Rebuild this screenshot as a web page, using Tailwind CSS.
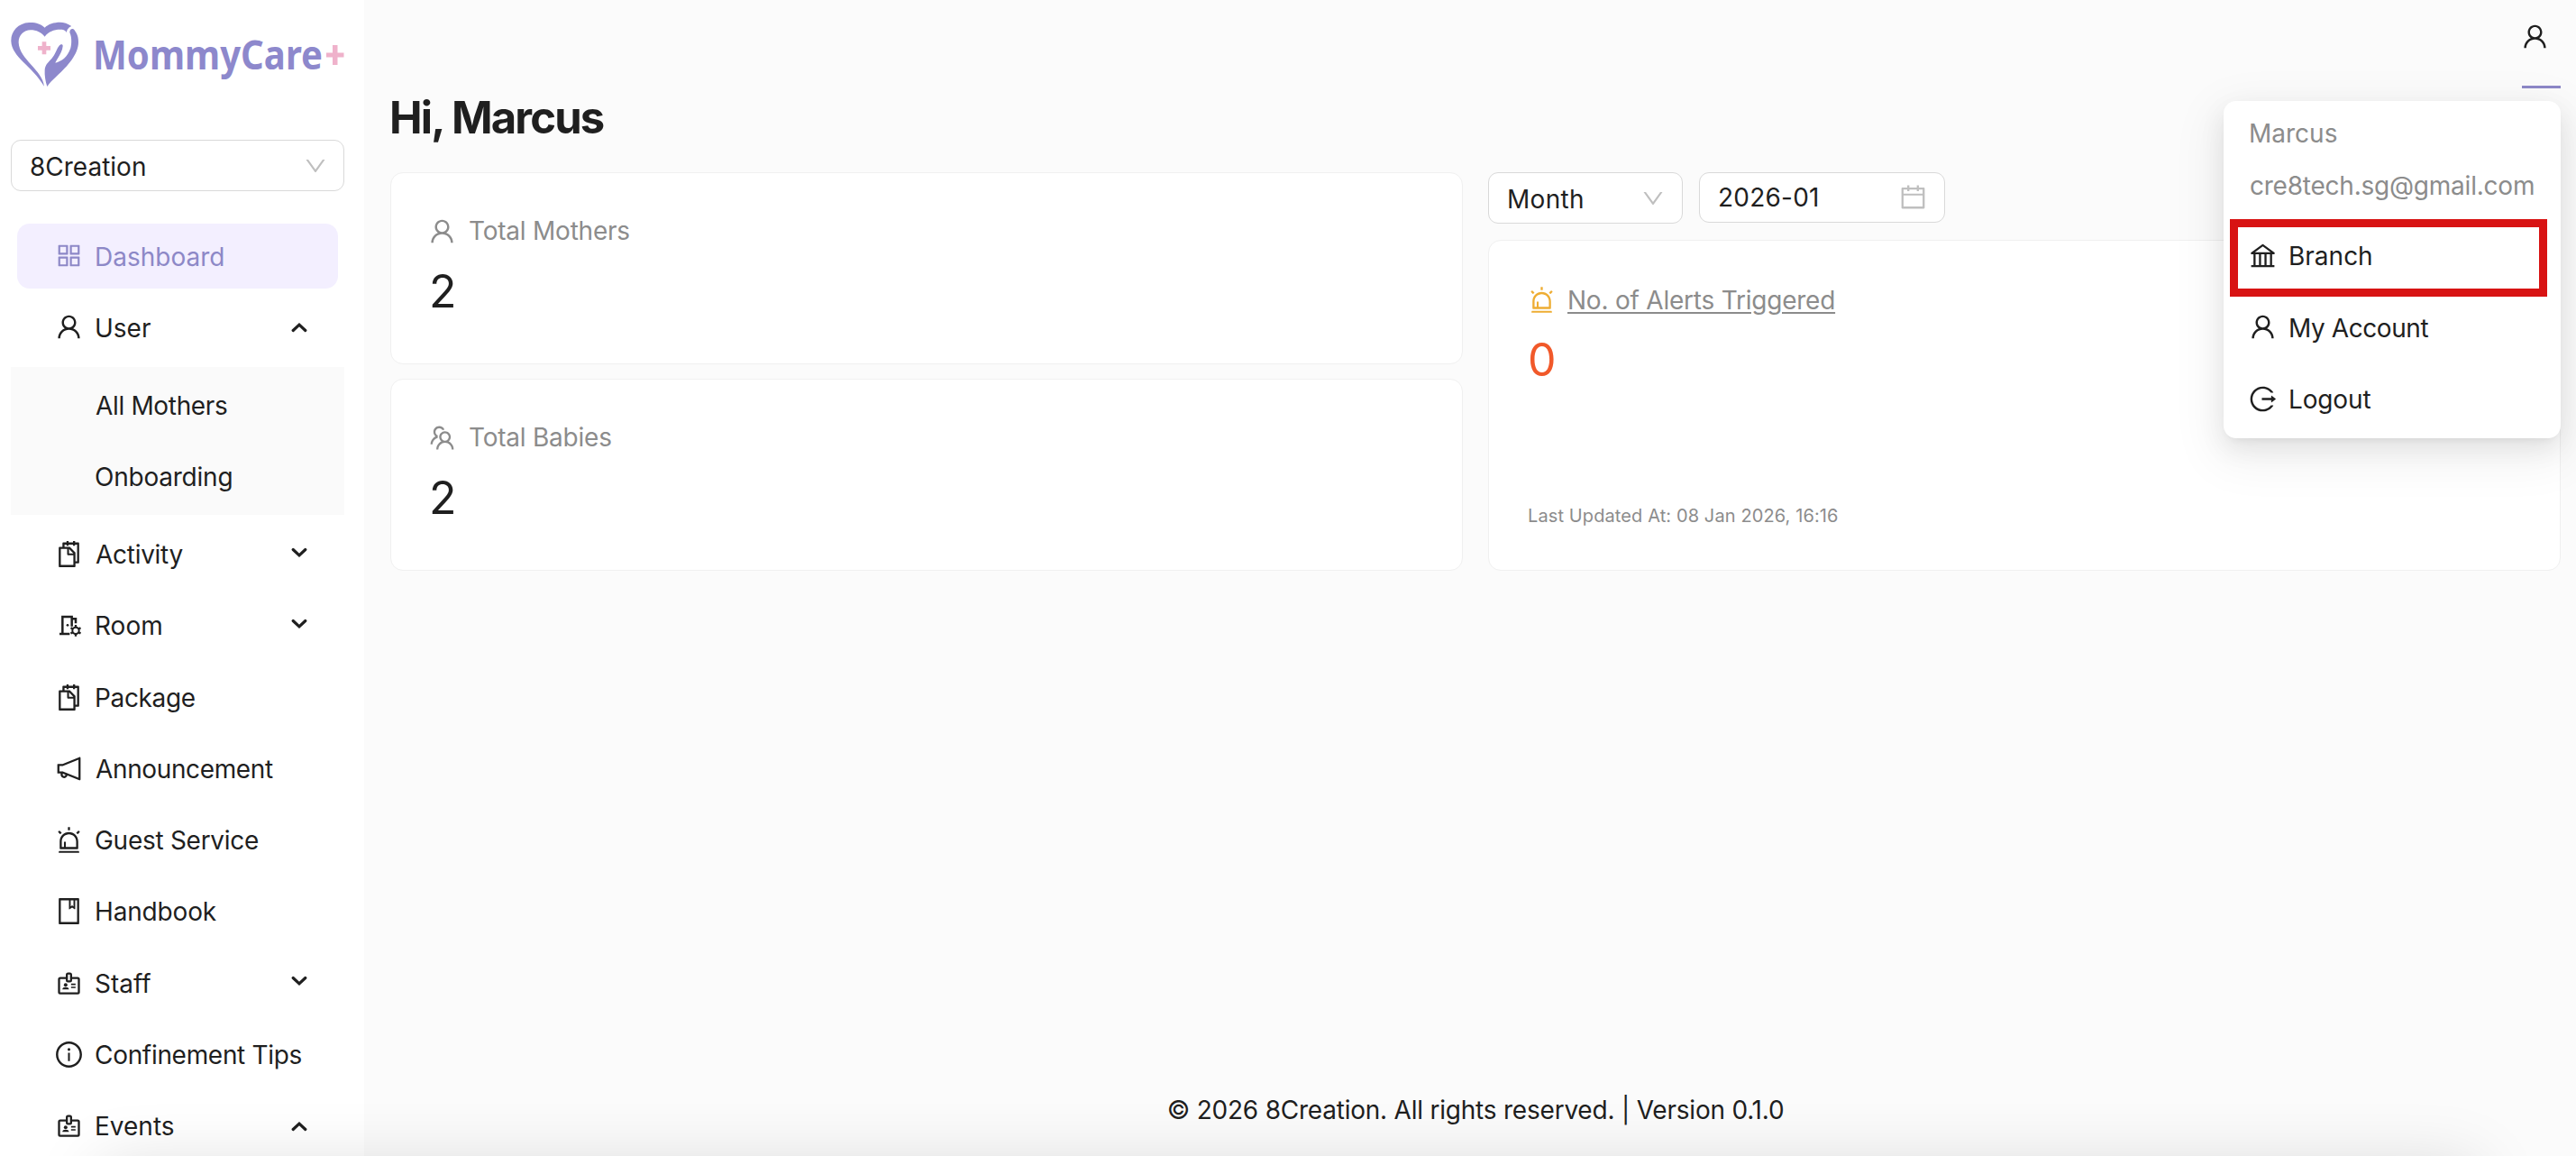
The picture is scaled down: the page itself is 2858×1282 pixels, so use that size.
<!DOCTYPE html>
<html lang="en">

<head>
  <meta charset="UTF-8">
  <meta name="viewport" content="width=device-width, initial-scale=1.0">
  <title>MommyCare+</title>
  <script src="https://cdn.jsdelivr.net/npm/@tailwindcss/browser@4"></script>
</head>

<body class="bg-[#fbfbfb] font-['Inter',sans-serif] text-[28px] text-[#1f1f1f]">
  <!-- icon sprite -->
  <svg class="hidden">
    <symbol id="user" viewBox="0 0 1024 1024"><path d="M858.5 763.6a374 374 0 00-80.6-119.5 375.63 375.63 0 00-119.5-80.6c-.4-.2-.8-.3-1.2-.5C719.5 518 760 444.7 760 362c0-137-111-248-248-248S264 225 264 362c0 82.7 40.5 156 102.8 201.1-.4.2-.8.3-1.2.5-44.8 18.9-85 46-119.5 80.6a375.63 375.63 0 00-80.6 119.5A371.7 371.7 0 00136 901.8a8 8 0 008 8.2h60c4.4 0 7.9-3.5 8-7.8 2-77.2 33-149.5 87.8-204.3 56.7-56.7 132-87.9 212.2-87.9s155.5 31.2 212.2 87.9C779 752.7 810 825 812 902.2c.1 4.4 3.6 7.8 8 7.8h60a8 8 0 008-8.2c-1-47.8-10.9-94.3-29.5-138.2zM512 534c-45.9 0-89.1-17.9-121.6-50.4S340 407.9 340 362c0-45.9 17.9-89.1 50.4-121.6S466.1 190 512 190s89.1 17.9 121.6 50.4S684 316.1 684 362c0 45.9-17.9 89.1-50.4 121.6S557.9 534 512 534z"/></symbol>
    <symbol id="appstore" viewBox="0 0 1024 1024"><path d="M464 144H160c-8.8 0-16 7.2-16 16v304c0 8.8 7.2 16 16 16h304c8.8 0 16-7.2 16-16V160c0-8.8-7.2-16-16-16zm-52 268H212V212h200v200zm452-268H560c-8.8 0-16 7.2-16 16v304c0 8.8 7.2 16 16 16h304c8.8 0 16-7.2 16-16V160c0-8.8-7.2-16-16-16zm-52 268H612V212h200v200zM464 544H160c-8.8 0-16 7.2-16 16v304c0 8.8 7.2 16 16 16h304c8.8 0 16-7.2 16-16V560c0-8.8-7.2-16-16-16zm-52 268H212V612h200v200zm452-268H560c-8.8 0-16 7.2-16 16v304c0 8.8 7.2 16 16 16h304c8.8 0 16-7.2 16-16V560c0-8.8-7.2-16-16-16zm-52 268H612V612h200v200z"/></symbol>
    <symbol id="snippets" viewBox="0 0 1024 1024"><path d="M832 112H724V72c0-4.4-3.6-8-8-8h-56c-4.4 0-8 3.6-8 8v40H500V72c0-4.4-3.6-8-8-8h-56c-4.4 0-8 3.6-8 8v40H320c-17.7 0-32 14.3-32 32v120h-96c-17.7 0-32 14.3-32 32v632c0 17.7 14.3 32 32 32h512c17.7 0 32-14.3 32-32v-96h96c17.7 0 32-14.3 32-32V144c0-17.7-14.3-32-32-32zM664 888H232V336h218v174c0 22.1 17.9 40 40 40h174v338zm0-402H514V336h.2L664 485.8v.2zm128 274h-56V456L544 264H360v-80h68v32c0 4.4 3.6 8 8 8h56c4.4 0 8-3.6 8-8v-32h152v32c0 4.4 3.6 8 8 8h56c4.4 0 8-3.6 8-8v-32h68v576z"/></symbol>
    <symbol id="notification" viewBox="0 0 1024 1024"><path d="M880 112c-3.8 0-7.7.7-11.6 2.3L292 345.9H128c-8.8 0-16 7.4-16 16.6v299c0 9.2 7.2 16.6 16 16.6h101.7c-3.7 11.6-5.7 23.9-5.7 36.4 0 65.9 53.8 119.5 120 119.5 55.4 0 102.1-37.6 115.9-88.4l408.6 164.2c3.9 1.5 7.8 2.3 11.6 2.3 16.9 0 32-14.2 32-33.2V145.2C912 126.2 897 112 880 112zM344 762.3c-26.5 0-48-21.4-48-47.8 0-11.2 3.9-21.9 11-30.4l84.9 34.1c-2 24.6-22.7 44.1-47.9 44.1zm496 58.4L318.8 611.3l-12.9-5.2H184V417.9h121.9l12.9-5.2L840 203.3v617.4z"/></symbol>
    <symbol id="alert" viewBox="0 0 1024 1024"><path d="M193 796c0 17.7 14.3 32 32 32h574c17.7 0 32-14.3 32-32V563c0-176.2-142.8-319-319-319S193 386.8 193 563v233zm72-233c0-136.4 110.6-247 247-247s247 110.6 247 247v193H404V585c0-5.5-4.5-10-10-10h-44c-5.5 0-10 4.5-10 10v171h-75V563zm-48.1-252.5l39.6-39.6c3.1-3.1 3.1-8.2 0-11.3l-67.9-67.9a8.03 8.03 0 00-11.3 0l-39.6 39.6a8.03 8.03 0 000 11.3l67.9 67.9c3.1 3.1 8.1 3.1 11.3 0zm669.6-79.2l-39.6-39.6a8.03 8.03 0 00-11.3 0l-67.9 67.9a8.03 8.03 0 000 11.3l39.6 39.6c3.1 3.1 8.2 3.1 11.3 0l67.9-67.9c3.1-3.2 3.1-8.2 0-11.3zM832 892H192c-17.7 0-32 14.3-32 32v24c0 4.4 3.6 8 8 8h688c4.4 0 8-3.6 8-8v-24c0-17.7-14.3-32-32-32zM484 180h56c4.4 0 8-3.6 8-8V76c0-4.4-3.6-8-8-8h-56c-4.4 0-8 3.6-8 8v96c0 4.4 3.6 8 8 8z"/></symbol>
    <symbol id="book" viewBox="0 0 1024 1024"><path d="M832 64H192c-17.7 0-32 14.3-32 32v832c0 17.7 14.3 32 32 32h640c17.7 0 32-14.3 32-32V96c0-17.7-14.3-32-32-32zm-260 72h96v209.9L621.5 312 572 347.4V136zm220 752H232V136h280v296.9c0 3.3 1 6.6 3 9.3a15.9 15.9 0 0022.3 3.7l83.8-59.9 81.4 59.4c2.7 2 6 3.1 9.4 3.1 8.8 0 16-7.2 16-16V136h64v752z"/></symbol>
    <symbol id="info" viewBox="0 0 1024 1024"><path d="M512 64C264.6 64 64 264.6 64 512s200.6 448 448 448 448-200.6 448-448S759.4 64 512 64zm0 820c-205.4 0-372-166.6-372-372s166.6-372 372-372 372 166.6 372 372-166.6 372-372 372z"/><path d="M464 336a48 48 0 1096 0 48 48 0 10-96 0zm72 112h-48c-4.4 0-8 3.6-8 8v272c0 4.4 3.6 8 8 8h48c4.4 0 8-3.6 8-8V456c0-4.4-3.6-8-8-8z"/></symbol>
    <symbol id="bank" viewBox="0 0 1024 1024"><path d="M894 462c30.9 0 43.8-39.7 18.7-58L530.8 126.2a31.81 31.81 0 00-37.6 0L111.3 404c-25.1 18.2-12.2 58 18.8 58H192v374h-72c-4.4 0-8 3.6-8 8v52c0 4.4 3.6 8 8 8h784c4.4 0 8-3.6 8-8v-52c0-4.4-3.6-8-8-8h-72V462h62zM512 196.7l271.1 197.2H240.9L512 196.7zM264 462h117v374H264V462zm189 0h117v374H453V462zm307 374H642V462h118v374z"/></symbol>
    <symbol id="logout" viewBox="0 0 1024 1024"><path d="M868 732h-70.3c-4.8 0-9.3 2.1-12.3 5.8-7 8.5-14.5 16.7-22.4 24.5a353.84 353.84 0 01-112.7 75.9A352.8 352.8 0 01512.4 866c-47.9 0-94.3-9.4-137.9-27.8a353.84 353.84 0 01-112.7-75.9 353.28 353.28 0 01-76-112.5C167.3 606.2 158 559.9 158 512s9.4-94.2 27.8-137.8c17.8-42.1 43.4-80 76-112.5s70.5-58.1 112.7-75.9c43.6-18.4 90-27.8 137.9-27.8 47.9 0 94.3 9.3 137.9 27.8 42.2 17.8 80.1 43.4 112.7 75.9 7.9 7.9 15.3 16.1 22.4 24.5 3 3.7 7.6 5.8 12.3 5.8H868c6.3 0 10.2-7 6.7-12.3C798 160.5 663.8 81.6 511.3 82 271.7 82.6 79.6 277.1 82 516.4 84.4 751.9 276.2 942 512.4 942c152.1 0 285.7-78.8 362.3-197.7 3.4-5.3-.4-12.3-6.7-12.3zm88.9-226.3L815 393.7c-5.3-4.2-13-.4-13 6.3v76H488c-4.4 0-8 3.6-8 8v56c0 4.4 3.6 8 8 8h314v76c0 6.7 7.8 10.5 13 6.3l141.9-112a8 8 0 000-12.6z"/></symbol>
    <symbol id="calendar" viewBox="0 0 1024 1024"><path d="M880 184H712v-64c0-4.4-3.6-8-8-8h-56c-4.4 0-8 3.6-8 8v64H384v-64c0-4.4-3.6-8-8-8h-56c-4.4 0-8 3.6-8 8v64H144c-17.7 0-32 14.3-32 32v664c0 17.7 14.3 32 32 32h736c17.7 0 32-14.3 32-32V216c0-17.7-14.3-32-32-32zm-40 656H184V460h656v380zM184 392V256h128v48c0 4.4 3.6 8 8 8h56c4.4 0 8-3.6 8-8v-48h256v48c0 4.4 3.6 8 8 8h56c4.4 0 8-3.6 8-8v-48h128v136H184z"/></symbol>
    <symbol id="down" viewBox="0 0 1024 1024"><path d="M884 256h-75c-5.1 0-9.9 2.5-12.9 6.6L512 654.2 227.9 262.6c-3-4.1-7.8-6.6-12.9-6.6h-75c-6.5 0-10.3 7.4-6.5 12.7l352.6 486.1c12.8 17.6 39 17.6 51.7 0l352.6-486.1c3.9-5.3.1-12.7-6.4-12.7z"/></symbol>
    <symbol id="team" viewBox="0 0 1024 1024"><path d="M824.2 699.9a301.55 301.55 0 00-86.4-60.4C783.1 602.8 812 546.8 812 484c0-110.8-92.4-201.7-203.2-200-109.1 1.7-197 90.6-197 200 0 62.8 29 118.8 74.2 155.5a300.95 300.95 0 00-86.4 60.4C345 754.6 314 826.8 312 903.8a8 8 0 008 8.2h56c4.3 0 7.9-3.4 8-7.7 1.9-58 25.4-112.3 66.7-153.5A226.62 226.62 0 01612 684c60.9 0 118.2 23.7 161.3 66.8C814.6 792 838 846.3 840 904.3c.1 4.3 3.7 7.7 8 7.7h56a8 8 0 008-8.2c-2-77-33-149.2-87.8-203.9zM612 612c-34.2 0-66.4-13.3-90.5-37.5a126.86 126.86 0 01-37.5-91.8c.3-32.8 13.4-64.5 36.3-88 24-24.6 56.1-38.3 90.4-38.7 33.9-.3 66.8 12.9 91 36.6 24.8 24.3 38.4 56.8 38.4 91.4 0 34.2-13.3 66.3-37.5 90.5A127.3 127.3 0 01612 612zM361.5 510.4c-.9-8.7-1.4-17.5-1.4-26.4 0-15.9 1.5-31.4 4.3-46.5.7-3.6-1.2-7.3-4.5-8.8-13.6-6.1-26.1-14.5-36.9-25.1a127.54 127.54 0 01-38.7-95.4c.9-32.1 13.8-62.6 36.3-85.6 24.7-25.3 57.9-39.1 93.2-38.7 31.9.3 62.7 12.6 86 34.4 7.9 7.4 14.7 15.6 20.4 24.4 2 3.1 5.9 4.4 9.3 3.2 17.6-6.1 36.2-10.4 55.3-12.4 5.6-.6 8.8-6.6 6.3-11.6-32.5-64.3-98.9-108.7-175.7-109.9-110.9-1.7-203.3 89.2-203.3 199.9 0 62.8 28.9 118.8 74.2 155.5-31.8 14.7-61.1 35-86.5 60.4-54.8 54.7-85.8 126.9-87.8 204a8 8 0 008 8.2h56.1c4.3 0 7.9-3.4 8-7.7 1.9-58 25.4-112.3 66.7-153.5 29.4-29.4 65.4-49.8 104.7-59.7 3.9-1 6.5-4.7 6-8.7z"/></symbol>
    <symbol id="room" viewBox="29 9 99 99">
      <path d="M47 87h34M57 87V30h31v32M88 37h13v15" fill="none" stroke="currentColor" stroke-width="7.5"/>
      <circle cx="74" cy="58" r="4"/>
      <circle cx="101" cy="76" r="11" fill="none" stroke="currentColor" stroke-width="6"/>
      <path d="M101 57v8M101 87v8M84.500 66.500l7 4M110.500 81.500l7 4M84.500 85.500l7-4M110.500 70.500l7-4" fill="none" stroke="currentColor" stroke-width="7"/>
    </symbol>
    <symbol id="badge" viewBox="179.500 129 99 99">
      <path d="M221 161h-21a4 4 0 0 0-4 4v43a4 4 0 0 0 4 4h58a4 4 0 0 0 4-4v-43a4 4 0 0 0-4-4h-21" fill="none" stroke="currentColor" stroke-width="7"/>
      <rect x="222" y="146" width="14" height="26" rx="4" fill="none" stroke="currentColor" stroke-width="7"/>
      <circle cx="218" cy="184" r="6"/>
      <path d="M207 199c0-6 5-8 11-8s11 2 11 8z"/>
      <path d="M236 182h15M236 192h15" stroke="currentColor" stroke-width="5"/>
    </symbol>
    <symbol id="chevron-down" viewBox="0 0 18 12"><path d="M2.200 2.500 9 8.800l6.800-6.300" fill="none" stroke="currentColor" stroke-width="3.200" stroke-linecap="round"/></symbol>
    <symbol id="chevron-up" viewBox="0 0 18 12"><path d="M2.200 9.500 9 3.200l6.800 6.300" fill="none" stroke="currentColor" stroke-width="3.200" stroke-linecap="round"/></symbol>
  </svg>

  <div class="relative flex h-[1282px] w-[2858px] overflow-hidden">
    <!-- sidebar -->
    <aside class="flex w-[404px] shrink-0 flex-col bg-white pl-3">
      <svg class="mt-[23px] h-[75px] w-[376px] shrink-0" viewBox="12 23 376 75">
        <g transform="translate(0 10) scale(.3333)">
          <path fill="#8d88cc" d="M149 62C137 50 118 44 97 45C60 47 36 74 37 107C39 160 108 190 147 257C141 203 64 167 62 112C61 88 80 70 101 70C122 70 138 78 149 92C160 76 180 68 200 68C209 68 216 69 222 78C222 68 230 60 238 57C226 48 212 44 200 44C180 44 160 50 149 62Z"/>
          <path fill="#8d88cc" d="M232 78C232 70 236 65 243 66C248 68 250 74 253 78C259 88 261 98 261 110C261 150 225 190 190 222C176 235 165 246 157 258C151 240 148 220 149 203C150 186 160 178 172 165C185 150 188 134 196 124C201 116 210 116 209 124C208 138 200 152 193 163C189 170 186 174 184 179C205 175 225 160 235 130C239 115 239 92 232 78Z"/>
          <path fill="#efb2cb" d="M140 109h14v14h14v14h-14v14h-14v-14h-14v-14h14z"/>
        </g>
        <text x="103" y="77" textLength="255" lengthAdjust="spacingAndGlyphs" font-family="Noto Sans" font-weight="700" font-size="45" fill="#8d88cc">MommyCare</text>
        <path fill="#efb2cb" d="M369 50h5.500v8.500h7v5h-7V72H369v-8.500h-7v-5h7z"/>
      </svg>

      <div class="mt-[57px] flex h-[57px] w-[370px] shrink-0 items-center justify-between rounded-[11px] border border-[#d9d9d9] pr-[17px] pl-5">
        <span class="pt-0.5">8Creation</span>
        <svg class="size-7 fill-[#bfbfbf]"><use href="#down"/></svg>
      </div>

      <nav class="mt-8 flex w-[370px] flex-col">
        <div class="flex h-[79.25px] items-center px-[7px]">
          <a class="flex h-[72px] w-full items-center gap-3 rounded-[14px] bg-[#f3efff] pl-[41px] text-[#8d88c7]">
            <svg class="size-[33px] fill-current"><use href="#appstore"/></svg><span class="pt-0.5">Dashboard</span>
          </a>
        </div>
        <div class="flex h-[79.25px] items-center gap-3 pr-[41px] pl-12">
          <svg class="size-[33px] fill-current"><use href="#user"/></svg><span class="grow pt-0.5">User</span>
          <svg class="h-3 w-[18px]"><use href="#chevron-up"/></svg>
        </div>
        <div class="my-1 flex flex-col bg-[#fafafa] py-[3px]">
          <div class="flex h-[79.25px] items-center pl-[94px] tracking-[-0.012em]"><span class="pt-0.5">All Mothers</span></div>
          <div class="flex h-[79.25px] items-center pl-[93px] tracking-[-0.008em]"><span class="pt-0.5">Onboarding</span></div>
        </div>
        <div class="flex h-[79.25px] items-center gap-[13px] pr-[41px] pl-12">
          <svg class="size-[33px] fill-current"><use href="#snippets"/></svg><span class="grow pt-px tracking-[-0.01em]">Activity</span>
          <svg class="mb-1 h-3 w-[18px]"><use href="#chevron-down"/></svg>
        </div>
        <div class="flex h-[79.25px] items-center gap-3 pr-[41px] pl-12">
          <svg class="size-[33px] fill-current"><use href="#room"/></svg><span class="grow pt-px">Room</span>
          <svg class="mb-1 h-3 w-[18px]"><use href="#chevron-down"/></svg>
        </div>
        <div class="flex h-[79.25px] items-center gap-3 pl-12">
          <svg class="size-[33px] fill-current"><use href="#snippets"/></svg><span class="pt-px tracking-[-0.012em]">Package</span>
        </div>
        <div class="flex h-[79.25px] items-center gap-[13px] pl-12">
          <svg class="size-[33px] fill-current"><use href="#notification"/></svg><span class="pt-px tracking-[-0.013em]">Announcement</span>
        </div>
        <div class="flex h-[79.25px] items-center gap-3 pl-12">
          <svg class="size-[33px] fill-current"><use href="#alert"/></svg><span class="pt-px tracking-[-0.010em]">Guest Service</span>
        </div>
        <div class="flex h-[79.25px] items-center gap-3 pl-12">
          <svg class="size-[33px] fill-current"><use href="#book"/></svg><span class="pt-px tracking-[-0.006em]">Handbook</span>
        </div>
        <div class="flex h-[79.25px] items-center gap-3 pr-[41px] pl-12">
          <svg class="size-[33px] fill-current"><use href="#badge"/></svg><span class="grow pt-px">Staff</span>
          <svg class="mb-1 h-3 w-[18px]"><use href="#chevron-down"/></svg>
        </div>
        <div class="flex h-[79.25px] items-center gap-3 pl-12">
          <svg class="size-[33px] fill-current"><use href="#info"/></svg><span class="pt-px tracking-[-0.011em]">Confinement Tips</span>
        </div>
        <div class="flex h-[79.25px] items-center gap-3 pr-[41px] pl-12">
          <svg class="size-[33px] fill-current"><use href="#badge"/></svg><span class="grow pt-px">Events</span>
          <svg class="h-3 w-[18px]"><use href="#chevron-up"/></svg>
        </div>
      </nav>
    </aside>

    <main class="flex grow flex-col pr-[17px] pl-[29px]">
      <header class="flex h-[98px] justify-end">
        <div class="w-[43px] border-b-[3px] border-[#8d88c7] pt-6">
          <svg class="-ml-0.5 size-[33px] fill-current"><use href="#user"/></svg>
        </div>
      </header>
      <h1 class="mb-[29px] h-16 -ml-px text-[49px] leading-[66px] font-bold tracking-[-0.038em]">Hi, Marcus</h1>

      <div class="grid h-[442px] grid-cols-2 gap-7">
        <div class="flex flex-col gap-4">
          <section class="flex h-[213px] flex-col gap-3 rounded-[14px] border border-[#f0f0f0] bg-white pt-[39px] pl-10">
            <div class="flex h-[50px] items-center gap-[13px] text-[#8c8c8c]">
              <svg class="size-[33px] fill-current"><use href="#user"/></svg><span class="tracking-[-0.008em]">Total Mothers</span>
            </div>
            <div class="ml-0.5 h-[60px] text-[50px] leading-[60px]">2</div>
          </section>
          <section class="flex h-[213px] flex-col gap-3 rounded-[14px] border border-[#f0f0f0] bg-white pt-[39px] pl-10">
            <div class="flex h-[50px] items-center gap-[13px] text-[#8c8c8c]">
              <svg class="size-[33px] fill-current"><use href="#team"/></svg><span class="tracking-[-0.008em]">Total Babies</span>
            </div>
            <div class="ml-0.5 h-[60px] text-[50px] leading-[60px]">2</div>
          </section>
        </div>

        <div class="flex flex-col">
          <div class="mb-[18px] flex h-[57px] items-start gap-[18px]">
            <div class="flex h-[57px] w-[216px] items-center justify-between rounded-[11px] border border-[#d9d9d9] bg-white pr-[18px] pl-5">
              <span class="pt-0.5 tracking-[0.011em]">Month</span>
              <svg class="size-7 fill-[#bfbfbf]"><use href="#down"/></svg>
            </div>
            <div class="flex h-14 w-[273px] items-center justify-between rounded-[11px] border border-[#d9d9d9] bg-white pr-[18px] pl-5">
              <span class="tracking-[0.008em]">2026-01</span>
              <svg class="mb-0.5 size-[33px] fill-[#bfbfbf]"><use href="#calendar"/></svg>
            </div>
          </div>
          <section class="flex grow flex-col rounded-[14px] border border-[#f0f0f0] bg-white pt-10 pb-10 pl-[42px]">
            <div class="flex h-[50px] items-center gap-3">
              <svg class="size-[33px] fill-[#eead33]"><use href="#alert"/></svg>
              <span class="pt-px tracking-[-0.008em] text-[#8c8c8c] underline decoration-2 underline-offset-[3px]">No. of Alerts Triggered</span>
            </div>
            <div class="mt-3 ml-px h-[60px] text-[50px] leading-[60px] text-[#f1592a]">0</div>
            <div class="mt-auto ml-px text-xl leading-10 tracking-[0.0054em] text-[#8c8c8c]">Last Updated At: 08 Jan 2026, 16:16</div>
          </section>
        </div>
      </div>

      <footer class="mt-auto mb-[31px] text-center leading-10 tracking-[-0.0078em]">© 2026 8Creation. All rights reserved. | Version 0.1.0</footer>
    </main>

    <!-- account menu -->
    <div class="absolute top-[112px] right-[17px] flex h-[374px] w-[374px] flex-col rounded-[14px] bg-white pt-[7px] pl-[27px] shadow-[0_11px_29px_0_rgba(0,0,0,0.08),0_5px_11px_-7px_rgba(0,0,0,0.12),0_16px_50px_14px_rgba(0,0,0,0.05)]">
      <div class="flex h-[58px] items-center pl-px text-[#8c8c8c]">Marcus</div>
      <div class="flex h-[58px] items-center pl-0.5 tracking-[-0.008em] text-[#8c8c8c]">cre8tech.sg@gmail.com</div>
      <div class="mt-[9px] flex h-[79.25px] items-center gap-3">
        <svg class="size-[33px] fill-current"><use href="#bank"/></svg><span class="pt-px">Branch</span>
      </div>
      <div class="flex h-[79.25px] items-center gap-3">
        <svg class="size-[33px] fill-current"><use href="#user"/></svg><span class="pt-0.5 tracking-[-0.015em]">My Account</span>
      </div>
      <div class="flex h-[79.25px] items-center gap-3">
        <svg class="size-[33px] fill-current"><use href="#logout"/></svg><span class="pt-0.5 tracking-[-0.005em]">Logout</span>
      </div>
    </div>
    <div class="absolute top-[243px] right-8 h-[86px] w-[352px] border-[9px] border-[#d81313]"></div>

    <!-- soft shade along the bottom edge -->
    <div class="pointer-events-none absolute inset-x-[110px] top-[1294px] h-20 shadow-[0_0_74px_rgba(0,0,0,0.15)]"></div>
  </div>
</body>

</html>
